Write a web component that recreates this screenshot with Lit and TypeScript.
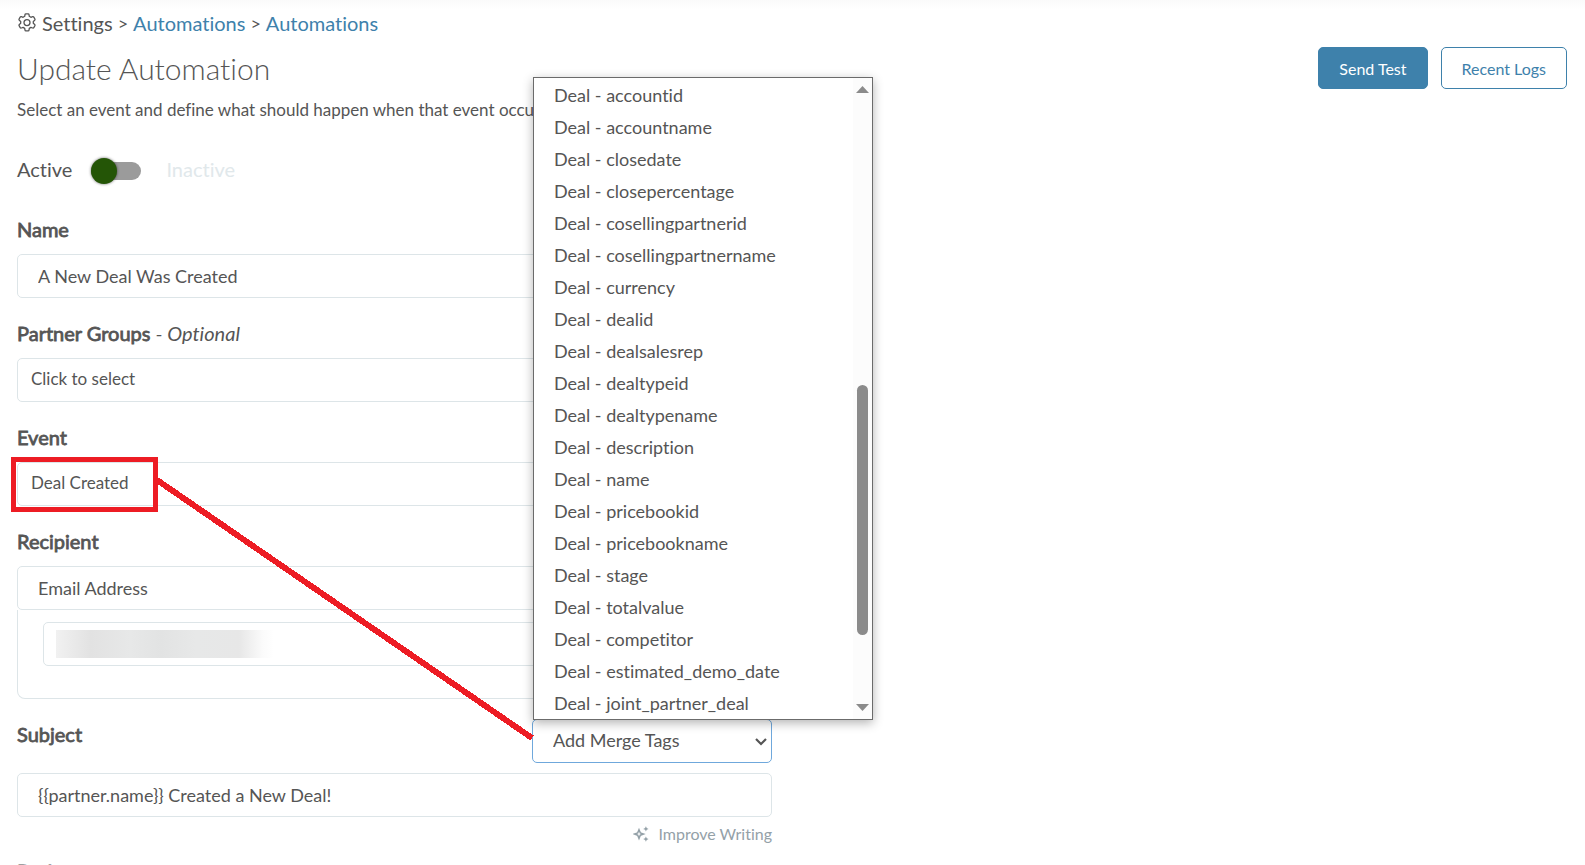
import { LitElement, html, css } from "lit";
import { customElement } from "lit/decorators.js";

const MERGE_TAGS = [
  "accountid", "accountname", "closedate", "closepercentage", "cosellingpartnerid",
  "cosellingpartnername", "currency", "dealid", "dealsalesrep", "dealtypeid",
  "dealtypename", "description", "name", "pricebookid", "pricebookname", "stage",
  "totalvalue", "competitor", "estimated_demo_date", "joint_partner_deal",
];

const gearIcon = html`
  <svg class="gear" viewBox="0 0 20 20" aria-hidden="true">
    <path d="M8 1.600Q8.100.8 8.900.8h2.200q.8 0 .9.800l.3 1.700 1.600 1 1.700-.6q.8-.3 1.200.4l1.100 1.900q.4.700-.2 1.200l-1.400 1.200v1.900l1.400 1.200q.6.500.2 1.200l-1.100 1.900q-.4.700-1.200.4l-1.700-.6-1.600 1-.3 1.700q-.1.800-.9.800H8.900q-.8 0-.9-.8l-.3-1.700-1.600-1-1.700.6q-.8.300-1.200-.4l-1.100-1.900q-.4-.7.2-1.200l1.400-1.200V8.400L2.300 7.200q-.6-.5-.2-1.200l1.100-1.900q.4-.7 1.200-.4l1.700.6 1.600-1z"/>
    <circle cx="10" cy="9.600" r="3"/>
  </svg>`;

const sparkleIcon = html`
  <svg class="sparkle" viewBox="0 0 16 16" aria-hidden="true">
    <path class="hollow" d="M6 3.700 7.300 6.900 10.500 8 7.300 9.200 6 12.400 4.700 9.200 1.400 8 4.700 6.900z"/>
    <path d="M12.900.3l.8 1.800 1.900.8-1.900.8-.8 1.800-.8-1.800-1.900-.8 1.900-.8zM12.900 10.400l.8 1.900 1.900.8-1.900.8-.8 1.900-.8-1.900-1.900-.8 1.900-.8z"/>
  </svg>`;

@customElement("merge-tag-picker")
export class MergeTagPicker extends LitElement {
  static styles = css`
    :host { display: block; position: relative; width: 240px; }
    .select {
      appearance: none;
      display: block;
      box-sizing: border-box;
      width: 100%;
      height: 44px;
      padding: 0 32px 2px 20px;
      border: 1px solid #6fa8dc;
      border-radius: 5px;
      outline: none;
      background: #fff;
      color: #555;
      font: 18px/24px Lato, sans-serif;
    }
    .chevron {
      position: absolute;
      right: 5px;
      top: 18px;
      width: 12px;
      height: 9px;
      fill: none;
      stroke: #555;
      stroke-width: 2.2;
      pointer-events: none;
    }
    .menu {
      position: absolute;
      left: 1px;
      bottom: 43px;
      z-index: 2;
      display: flex;
      box-sizing: border-box;
      width: 340px;
      border: 1px solid #6b6b6b;
      background: #fff;
      box-shadow: 0 3px 10px rgba(0, 0, 0, 0.3);
    }
    .list { flex: 1; margin: 0; padding: 1px 0 0; list-style: none; }
    .option { padding: 0 20px; color: #555; font: 18px/32px Lato, sans-serif; font-variant-ligatures: none; white-space: nowrap; }
    .scrollbar {
      display: flex;
      flex-direction: column;
      align-items: center;
      width: 19px;
      background: #fcfcfc;
    }
    .arrow { width: 13px; height: 7px; margin: 8px 0; fill: #8b8b8b; }
    .track { flex: 1; display: grid; grid-template-rows: 284fr 249fr 61fr; }
    .thumb { grid-row: 2; width: 11px; border-radius: 6px; background: #8b8b8b; }
  `;

  render() {
    return html`
      <select class="select" aria-label="Add Merge Tags"><option>Add Merge Tags</option></select>
      <svg class="chevron" viewBox="0 0 12 9" aria-hidden="true"><path d="M1 2l5 5 5-5"/></svg>
      <div class="menu">
        <ul class="list" role="listbox" aria-label="Merge tags">
          ${MERGE_TAGS.map((t) => html`<li class="option" role="option">Deal - ${t}</li>`)}
        </ul>
        <div class="scrollbar" aria-hidden="true">
          <svg class="arrow" viewBox="0 0 13 7"><path d="M0 7 6.500 0 13 7z"/></svg>
          <div class="track"><div class="thumb"></div></div>
          <svg class="arrow" viewBox="0 0 13 7"><path d="M0 0h13L6.500 7z"/></svg>
        </div>
      </div>`;
  }
}

@customElement("app-root")
export class AppRoot extends LitElement {
  static styles = css`
    :host {
      display: block;
      box-sizing: border-box;
      height: 100vh;
      overflow: hidden;
      padding: 11px 18px 0 17px;
      background: linear-gradient(#fafafa, #fff 10px);
      color: #555;
      font: 18px/24px Lato, sans-serif;
      font-variant-ligatures: none;
    }
    a { color: #3e81ab; text-decoration: none; }
    .crumbs { display: flex; align-items: center; gap: 5px; font-size: 20px; line-height: 24px; }
    .gear { width: 20px; height: 20px; fill: none; stroke: #555; stroke-width: 1.3; stroke-linejoin: round; }
    .sep { font-size: 18px; }
    .header { display: flex; justify-content: space-between; align-items: flex-start; padding-top: 12px; }
    .title { margin: 0; padding-top: 2px; font-size: 30px; line-height: 38px; font-weight: 300; }
    .intro { margin: 0; padding-top: 11px; font-size: 17px; }
    .actions { display: flex; gap: 13px; }
    .btn {
      height: 42px;
      padding: 2px 20px 0;
      border: 1px solid #3e81ab;
      border-radius: 5px;
      background: #fff;
      color: #3e81ab;
      font: 16px/20px Lato, sans-serif;
    }
    .primary { background: #3e81ab; color: #fff; }
    .columns { display: grid; grid-template-columns: 1fr 1fr; gap: 40px; }
    .form { position: relative; }
    .status { display: flex; align-items: center; gap: 18px; padding: 34px 0 23px; font-size: 20px; line-height: 26px; }
    .switch { display: flex; align-items: center; width: 52px; height: 26px; margin-right: 6px; }
    .toggle {
      appearance: none;
      display: flex;
      align-items: center;
      box-sizing: border-box;
      width: 50px;
      height: 18px;
      margin: 4px 0 0 1px;
      border-radius: 9px;
      background: #9b9b9b;
    }
    .toggle::before {
      content: "";
      width: 26px;
      height: 26px;
      border-radius: 50%;
      background: #245506;
      box-shadow: 0 0 3px rgba(0, 0, 0, 0.6);
    }
    .off { color: #e1e8eb; }
    .label { display: block; padding: 11px 0 12px; font-size: 20px; line-height: 26px; font-weight: 400; -webkit-text-stroke: 0.8px #555; }
    .hint { -webkit-text-stroke: 0; }
    .field { padding-bottom: 11px; }
    .control {
      display: block;
      appearance: none;
      box-sizing: border-box;
      width: 100%;
      height: 44px;
      padding: 0 20px;
      border: 1px solid #dde5e8;
      border-radius: 5px;
      outline: none;
      background: #fff;
      color: #555;
      font: 18px/24px Lato, sans-serif;
      text-align: left;
    }
    .tight { padding: 0 13px 2px; font-size: 17px; }
    .panel { padding: 12px 25px 32px; border: 1px solid #dde5e8; border-top: 0; border-radius: 0 0 8px 8px; }
    .masked { position: relative; }
    .smudge {
      position: absolute;
      left: 13px;
      top: 8px;
      width: 218px;
      height: 28px;
      background: linear-gradient(90deg, #f1f1f1, #e2e2e2 16%, #e7e8e8 34%, #e2e3e3 48%, #e7e8e8 64%, #e7e7e7 84%, #fbfbfb 95%, #fff);
    }
    .subject-row { display: flex; justify-content: space-between; align-items: flex-start; padding: 20px 0 10px; }
    .subject-row .label { padding: 2px 0; }
    .improve {
      display: flex;
      align-items: center;
      gap: 9px;
      margin: 7px 0 3px auto;
      padding: 0;
      border: 0;
      background: none;
      color: #94a1a8;
      font: 16px/20px Lato, sans-serif;
      font-variant-ligatures: none;
    }
    .sparkle { width: 16px; height: 16px; fill: #94a1a8; }
    .hollow { fill: none; stroke: #94a1a8; stroke-width: 1.5; }
    .event { position: relative; }
    .marks { position: absolute; left: -6px; top: -5px; width: 522px; height: 286px; z-index: 1; overflow: visible; pointer-events: none; fill: none; stroke: #ed1c24; stroke-width: 5; shape-rendering: crispEdges; }
  `;

  render() {
    return html`
      <nav class="crumbs" aria-label="Breadcrumb">
        ${gearIcon}<span>Settings</span><span class="sep">&gt;</span><a href="#">Automations</a><span class="sep">&gt;</span><a href="#">Automations</a>
      </nav>
      <header class="header">
        <div>
          <h1 class="title">Update Automation</h1>
          <p class="intro">Select an event and define what should happen when that event occurs.</p>
        </div>
        <div class="actions">
          <button class="btn primary" type="button">Send Test</button>
          <button class="btn" type="button">Recent Logs</button>
        </div>
      </header>
      <div class="columns">
        <form class="form">
          <div class="status">
            <label for="state">Active</label>
            <span class="switch"><input class="toggle" id="state" type="checkbox" role="switch"></span>
            <span class="off">Inactive</span>
          </div>
          <div class="field">
            <label class="label" for="name">Name</label>
            <input class="control" id="name" type="text" value="A New Deal Was Created">
          </div>
          <div class="field">
            <label class="label" for="groups">Partner Groups <i class="hint">- Optional</i></label>
            <button class="control tight" id="groups" type="button">Click to select</button>
          </div>
          <div class="field">
            <label class="label" for="event">Event</label>
            <div class="event">
              <select class="control tight" id="event"><option>Deal Created</option></select>
              <svg class="marks" viewBox="0 0 522 286" aria-hidden="true">
                <rect x="2.500" y="2.500" width="142" height="50"/>
                <path stroke-width="6" d="M146 23 521 281"/>
              </svg>
            </div>
          </div>
          <div>
            <label class="label" for="recipient">Recipient</label>
            <select class="control" id="recipient"><option>Email Address</option></select>
            <div class="panel">
              <div class="masked">
                <input class="control" type="email" aria-label="Recipient address">
                <span class="smudge"></span>
              </div>
            </div>
          </div>
          <div class="subject-row">
            <label class="label" for="subject">Subject</label>
            <merge-tag-picker></merge-tag-picker>
          </div>
          <input class="control" id="subject" type="text" value="{{partner.name}} Created a New Deal!">
          <button class="improve" type="button">${sparkleIcon}Improve Writing</button>
          <label class="label" for="body">Body</label>
          <textarea class="control" id="body"></textarea>
        </form>
      </div>`;
  }
}
